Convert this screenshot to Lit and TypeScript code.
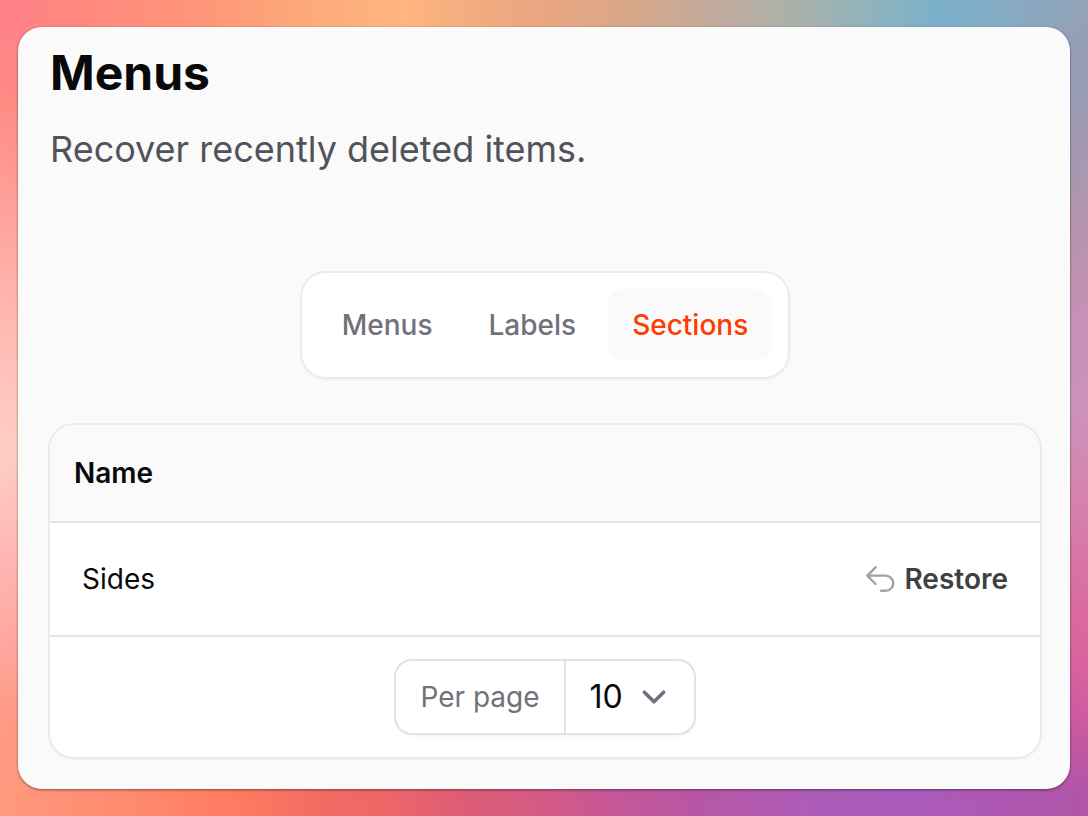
import { LitElement, html, css } from "lit";
import { customElement, state } from "lit/decorators.js";

@customElement("app-root")
export class AppRoot extends LitElement {
  static styles = css`
    :host {
      display: block;
      font-family: Inter, "Liberation Sans", sans-serif;
      color: #09090b;
    }
    * {
      box-sizing: border-box;
    }
    .backdrop {
      display: flex;
      min-height: 100vh;
      padding: 27px 18px;
      background:
        linear-gradient(90deg, #ff8088, #ff8a7d 9%, #ff9578 18%, #fca97a 28%, #ffb57f 37%, #f2ab80 44%, #e8a582 51%, #d5a88c 59%, #bfaa9c 66%, #aeb0a8 72%, #92b3bb 79%, #7bb1cb 86%, #84abc4 92%, #93a1b8) top / 100% 27px no-repeat,
        linear-gradient(90deg, #ff997d, #ff866a 15%, #ff7a60 22%, #f36a64 30%, #ee6768 35%, #df5d74 42%, #d45a86 50%, #c4579a 57%, #b756a4 64%, #ad5cb8 74%, #a95bbb 83%, #ad58b5 90%, #b055a8) bottom / 100% 27px no-repeat,
        linear-gradient(180deg, #ff8088, #ff8a84 12%, #ffa09a 25%, #ffb5ae 37%, #ffc8c0 50%, #ffccc6 56%, #ffb5b3 69%, #ffa59c 80%, #ff9a84 88%, #ff997d) left / 50% 100% no-repeat,
        linear-gradient(180deg, #93a1b8, #989db4 12%, #b095ae 25%, #c491b5 37%, #cc92bc 50%, #d583ad 61%, #da6ba2 74%, #da659f 80%, #d05ca0 87%, #bd56a4 93%, #b055a8) right / 50% 100% no-repeat;
    }
    .panel {
      flex: 1;
      padding: 14px 30px 32px 32px;
      border-radius: 24px;
      background: #fafafa;
      box-shadow: 0 1px 3px rgba(0, 0, 0, 0.45);
    }
    h1 {
      margin: 0 0 16px;
      font-size: 48px;
      line-height: 64px;
      font-weight: 700;
    }
    .subtitle {
      margin: 0 0 96px;
      font-size: 36px;
      line-height: 56px;
      color: #52525b;
    }
    .tabs {
      display: flex;
      gap: 8px;
      width: fit-content;
      margin: 0 auto 48px;
      padding: 16px;
      border-radius: 24px;
      background: #fff;
      box-shadow: 0 0 0 2px #ebebeb, 0 2px 4px rgba(0, 0, 0, 0.06);
    }
    .tab {
      height: 72px;
      padding: 0 24px;
      border: 0;
      border-radius: 16px;
      background: none;
      font: 500 28px/40px Inter, "Liberation Sans", sans-serif;
      color: #71717a;
      cursor: pointer;
    }
    .tab[aria-selected="true"] {
      background: #fafafa;
      color: #ff3b00;
    }
    .card {
      overflow: hidden;
      border-radius: 24px;
      background: #fff;
      box-shadow: 0 0 0 2px #ebebeb, 0 2px 4px rgba(0, 0, 0, 0.06);
    }
    table {
      width: 100%;
      border-spacing: 0;
      font-size: 28px;
      line-height: 40px;
    }
    th {
      padding: 28px 24px;
      text-align: left;
      font-weight: 600;
      background: #fafafa;
    }
    th,
    td {
      border-bottom: 2px solid #e4e4e5;
    }
    td {
      padding: 36px 32px;
    }
    .actions {
      text-align: right;
    }
    .restore {
      display: inline-flex;
      align-items: center;
      gap: 8px;
      padding: 0;
      border: 0;
      background: none;
      font: 600 28px/40px Inter, "Liberation Sans", sans-serif;
      color: #3f3f46;
      vertical-align: top;
      cursor: pointer;
    }
    .restore svg {
      width: 32px;
      height: 28px;
      fill: none;
      stroke: #a1a1aa;
      stroke-width: 2.4;
      stroke-linecap: round;
      stroke-linejoin: round;
    }
    .footer {
      display: flex;
      justify-content: center;
      padding: 24px;
    }
    .per-page {
      display: flex;
      border-radius: 16px;
      background: #fff;
      box-shadow: 0 0 0 2px #e2e2e3, 0 2px 4px rgba(0, 0, 0, 0.08);
    }
    .per-page label {
      padding: 16px 24px;
      border-right: 2px solid #e2e2e3;
      font-size: 28px;
      line-height: 40px;
      color: #71717a;
    }
    .per-page select {
      appearance: none;
      width: 128px;
      height: 72px;
      padding: 0 0 0 24px;
      border: 0;
      border-radius: 0 16px 16px 0;
      font: 400 32px/48px Inter, "Liberation Sans", sans-serif;
      color: #09090b;
      background: url("data:image/svg+xml,%3csvg xmlns='http://www.w3.org/2000/svg' fill='none' viewBox='0 0 20 20'%3e%3cpath stroke='%236b7280' stroke-linecap='round' stroke-linejoin='round' stroke-width='1.5' d='M6 8l4 4 4-4'/%3e%3c/svg%3e") right 16px center / 48px 48px no-repeat;
    }
  `;

  @state() private active = "Sections";

  render() {
    return html`
      <div class="backdrop">
        <main class="panel">
          <h1>Menus</h1>
          <p class="subtitle">Recover recently deleted items.</p>
          <div class="tabs" role="tablist">
            ${["Menus", "Labels", "Sections"].map(
              (name) => html`<button
                class="tab"
                role="tab"
                aria-selected=${name === this.active ? "true" : "false"}
                @click=${() => (this.active = name)}
              >${name}</button>`
            )}
          </div>
          <section class="card">
            <table>
              <thead>
                <tr>
                  <th colspan="2" scope="col">Name</th>
                </tr>
              </thead>
              <tbody>
                <tr>
                  <td>Sides</td>
                  <td class="actions">
                    <button class="restore">
                      <svg viewBox="0 0 32 28" aria-hidden="true">
                        <path d="M11.6 2.3L3.2 10.6l8.4 8.4M3.2 10.6H21.7a7.55 7.55 0 0 1 0 15.1H17.2" />
                      </svg>
                      Restore
                    </button>
                  </td>
                </tr>
              </tbody>
            </table>
            <div class="footer">
              <div class="per-page">
                <label for="per-page">Per page</label>
                <select id="per-page">
                  <option>5</option>
                  <option selected>10</option>
                  <option>25</option>
                  <option>50</option>
                </select>
              </div>
            </div>
          </section>
        </main>
      </div>
    `;
  }
}
